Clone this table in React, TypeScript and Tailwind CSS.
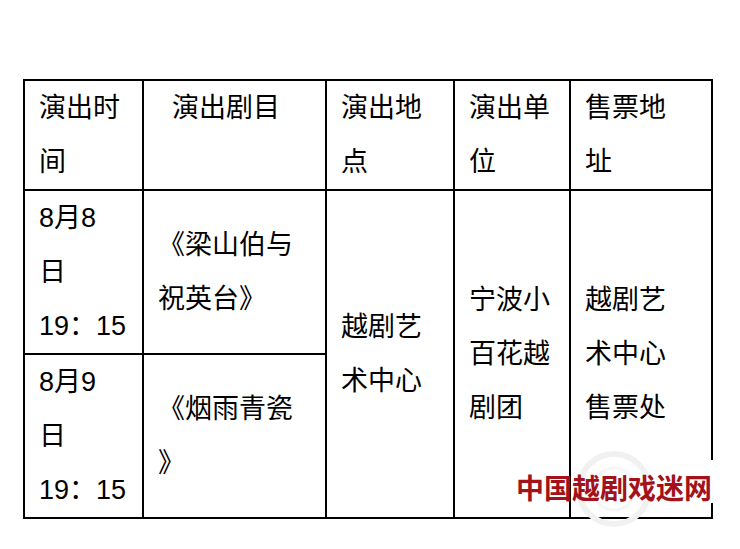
const FONT = { fontFamily: '"Liberation Sans", "Noto Sans CJK SC", sans-serif' };

const HEADERS: { lines: string[]; indent?: boolean }[] = [
  { lines: ["演出时", "间"] },
  { lines: ["演出剧目"], indent: true },
  { lines: ["演出地", "点"] },
  { lines: ["演出单", "位"] },
  { lines: ["售票地", "址"] },
];

function Lines({ lines }: { lines: string[] }) {
  return (
    <>
      {lines.map((line, i) => (
        <span key={i} className="block whitespace-nowrap">
          {line}
        </span>
      ))}
    </>
  );
}

const cell = "border-2 border-black px-[14px] py-0 align-middle";

export default function App() {
  return (
    <div className="relative min-h-[549px] w-[740px] bg-white pl-[23px] pt-[79px]" style={FONT}>
      <table className="w-[690px] table-fixed border-collapse text-[27px] leading-[54px] text-black">
        <colgroup>
          <col className="w-[119px]" />
          <col className="w-[183px]" />
          <col className="w-[128px]" />
          <col className="w-[116px]" />
          <col className="w-[142px]" />
        </colgroup>
        <thead>
          <tr>
            {HEADERS.map((h, i) => (
              <th
                key={i}
                className={`border-2 border-black py-0 text-left align-top font-normal ${
                  h.indent ? "pl-[28px] pr-[14px]" : "px-[14px]"
                }`}
              >
                <Lines lines={h.lines} />
              </th>
            ))}
          </tr>
        </thead>
        <tbody>
          <tr>
            <td className={cell}>
              <Lines lines={["8月8", "日", "19：15"]} />
            </td>
            <td className={cell}>
              <Lines lines={["《梁山伯与", "祝英台》"]} />
            </td>
            <td rowSpan={2} className={cell}>
              <Lines lines={["越剧艺", "术中心"]} />
            </td>
            <td rowSpan={2} className={cell}>
              <Lines lines={["宁波小", "百花越", "剧团"]} />
            </td>
            <td rowSpan={2} className={cell}>
              <Lines lines={["越剧艺", "术中心", "售票处"]} />
            </td>
          </tr>
          <tr>
            <td className={cell}>
              <Lines lines={["8月9", "日", "19：15"]} />
            </td>
            <td className={cell}>
              <Lines lines={["《烟雨青瓷", "》"]} />
            </td>
          </tr>
        </tbody>
      </table>

      {/* watermark */}
      <div className="absolute left-[572px] top-[460px] h-[43px] w-[150px] bg-white" />
      <svg className="absolute left-[574px] top-[446px]" width="80" height="86" viewBox="0 0 80 86">
        <circle cx="40" cy="43" r="35" fill="none" stroke="#f1f1f1" strokeWidth="6" />
        <circle cx="40" cy="43" r="21" fill="none" stroke="#f6f6f6" strokeWidth="3" />
      </svg>
      <div
        className="absolute left-[516px] top-[473px] whitespace-nowrap text-[28px] font-semibold leading-[28px] text-[#a3121b]"
        style={{ fontFamily: '"Noto Sans CJK SC", sans-serif' }}
      >
        中国越剧戏迷网
      </div>
    </div>
  );
}
